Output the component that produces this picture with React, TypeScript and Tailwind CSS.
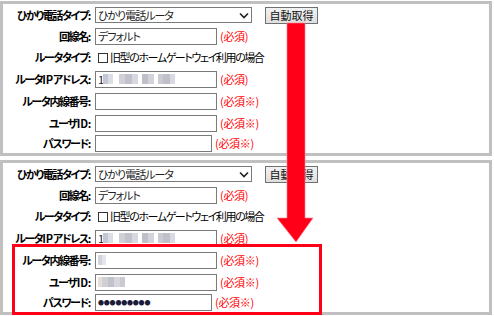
import React from "react";

const Required = ({ mark }: { mark?: boolean }) => (
  <span className="ml-[3px] text-[11px] text-[#ff0000] whitespace-nowrap tracking-[-0.3px]">{mark ? "(必須※)" : "(必須)"}</span>
);

const Label = ({ children }: { children: React.ReactNode }) => (
  <div className="w-[89px] shrink-0 text-right font-bold text-[11px] pr-[2px] whitespace-nowrap text-black tracking-[-1.4px]">{children}</div>
);

const Latin = ({ children }: { children: React.ReactNode }) => (
  <span className="tracking-[-0.2px]">{children}</span>
);

const Box = ({ w, children }: { w: string; children?: React.ReactNode }) => (
  <div className={`${w} h-[17px] ml-[3px] border border-[#7a7a7a] bg-white flex items-center pl-[2px] text-[11px] text-[#222] overflow-hidden whitespace-nowrap tracking-[-1px]`}>
    {children}
  </div>
);

const Mosaic = ({ blocks }: { blocks: { w: number; c: string }[] }) => (
  <span className="flex items-center h-[10px]">
    {blocks.map((b, i) => (
      <span key={i} className="h-[10px] inline-block" style={{ width: b.w, background: b.c }} />
    ))}
  </span>
);

const ipMosaic = (
  <span className="flex items-center">
    <span className="text-[11px]">1</span>
    <Mosaic blocks={[{ w: 5, c: "#c3c7d3" }, { w: 5, c: "#dcdee6" }]} />
    <span className="w-[6px]" />
    <Mosaic blocks={[{ w: 6, c: "#d0d0d8" }, { w: 7, c: "#c2c2cc" }, { w: 6, c: "#d8d8e0" }]} />
    <span className="w-[4px]" />
    <Mosaic blocks={[{ w: 6, c: "#bfbfc9" }, { w: 6, c: "#d3d3db" }]} />
    <span className="w-[4px]" />
    <Mosaic blocks={[{ w: 5, c: "#cbcbd3" }, { w: 7, c: "#c0c0ca" }, { w: 5, c: "#d9d9e1" }]} />
  </span>
);

function Panel({ filled }: { filled: boolean }) {
  return (
    <div className="w-[492px] h-[155px] border-[3px] border-[#c0c0c0] flex flex-col">
      <div className="h-[22px] flex items-center">
        <Label>ひかり電話タイプ:</Label>
        <div className="w-[157px] h-[16px] ml-[3px] border border-[#7a7a7a] bg-white flex items-center justify-between pl-[2px] pr-[2px] text-[11px] text-[#222]">
          <span className="tracking-[-1px]">ひかり電話ルータ</span>
          <svg width="10" height="7" viewBox="0 0 10 7">
            <path d="M1 1.5 L5 5.5 L9 1.5" fill="none" stroke="#222" strokeWidth="1.6" />
          </svg>
        </div>
        <button className="ml-[13px] w-[53px] h-[17px] border border-[#707070] bg-gradient-to-b from-[#f2f2f2] to-[#dedede] text-[11px] text-[#111] leading-none flex items-center justify-center">
          自動取得
        </button>
      </div>
      <div className="h-[21px] flex items-center">
        <Label>回線名:</Label>
        <Box w="w-[122px]">デフォルト</Box>
        <Required />
      </div>
      <div className="h-[21px] flex items-center">
        <Label>ルータタイプ:</Label>
        <span className="ml-[6px] w-[10px] h-[10px] border border-[#333] bg-white" />
        <span className="ml-[2px] text-[11px] text-black whitespace-nowrap tracking-[-1.4px]">旧型のホームゲートウェイ利用の場合</span>
      </div>
      <div className="h-[22px] flex items-center">
        <Label>ルータ<Latin>IP</Latin>アドレス:</Label>
        <Box w="w-[122px]">{ipMosaic}</Box>
        <Required />
      </div>
      <div className="h-[22px] flex items-center">
        <Label>ルータ内線番号:</Label>
        <Box w="w-[122px]">
          {filled ? <Mosaic blocks={[{ w: 4, c: "#d2d4dc" }, { w: 4, c: "#e4e4ea" }]} /> : null}
        </Box>
        <Required mark />
      </div>
      <div className="h-[22px] flex items-center">
        <Label>ユーザ<Latin>ID</Latin>:</Label>
        <Box w="w-[122px]">
          {filled ? (
            <Mosaic
              blocks={[
                { w: 4, c: "#e6dcd8" },
                { w: 6, c: "#cfcfd6" },
                { w: 6, c: "#c2c2ca" },
                { w: 6, c: "#d6d6dc" },
                { w: 5, c: "#cacad2" },
              ]}
            />
          ) : null}
        </Box>
        <Required mark />
      </div>
      <div className="h-[19px] flex items-center">
        <Label>パスワード:</Label>
        <Box w="w-[117px]">
          {filled ? <span className="text-[6px] tracking-[-0.2px] text-[#1c1c3a] leading-none">●●●●●●●●●</span> : null}
        </Box>
        <Required mark />
      </div>
    </div>
  );
}

export default function App() {
  return (
    <div className="relative w-[494px] h-[316px] bg-white overflow-hidden font-['Noto_Sans_CJK_JP',sans-serif] [font-feature-settings:'palt']">
      <div className="pt-px flex flex-col gap-[4px]">
        <Panel filled={false} />
        <Panel filled={true} />
      </div>
      <div className="absolute left-[12px] top-[244px] w-[310px] h-[71px] border-[3px] border-[#ff0018]" />
      <svg className="absolute left-0 top-0 pointer-events-none" width="494" height="316" viewBox="0 0 494 316">
        <path
          d="M287 23 L305 23 L305 218 L313 218 L296 242 L277 218 L287 218 Z"
          fill="#ff0018"
          stroke="#ff8090"
          strokeOpacity="0.6"
          strokeWidth="1"
        />
      </svg>
    </div>
  );
}
